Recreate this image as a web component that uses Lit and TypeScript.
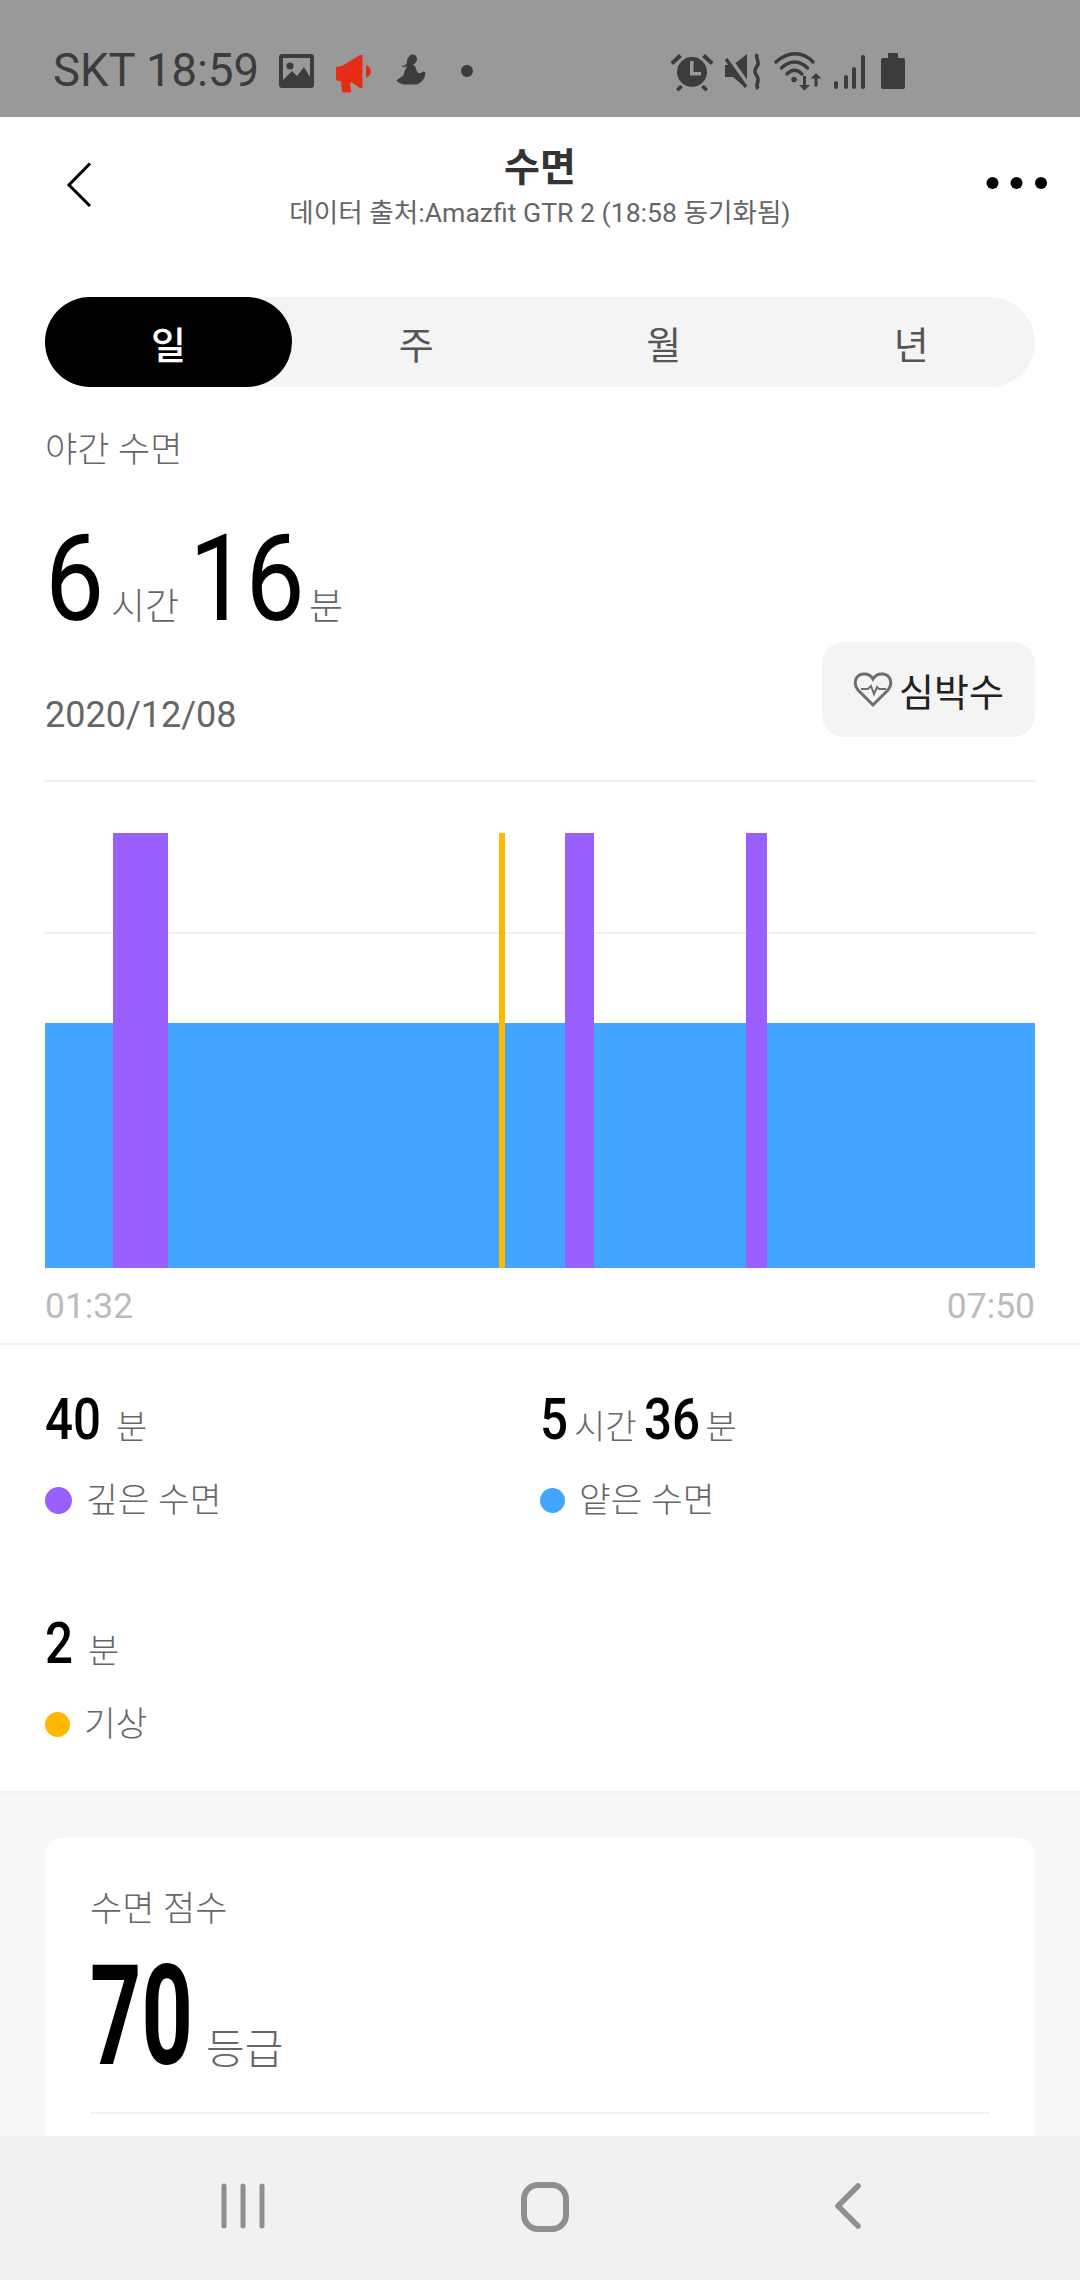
import { LitElement, html, css, svg } from "lit";
import { customElement } from "lit/decorators.js";

const BLUE = "#42a5ff";
const PURPLE = "#9a60ff";
const YELLOW = "#ffb800";

// chart segments in chart coordinates (x, width, colour)
const SEGMENTS = [
  { x: 68, w: 55, c: PURPLE },
  { x: 454, w: 6, c: YELLOW },
  { x: 520, w: 29, c: PURPLE },
  { x: 701, w: 21, c: PURPLE },
];

const num = (v: string, cls: string, adv: number) =>
  html`<span class="num" style="width:${v.length * adv}px"><span class="digits ${cls}">${v}</span></span>`;

@customElement("app-root")
export class AppRoot extends LitElement {
  static styles = css`
    :host { display: block; width: 1080px; height: 2280px; overflow: hidden; position: relative; background: #fff;
      font-family: Roboto, "Noto Sans CJK KR", sans-serif; color: #666; }
    svg { display: block; }
    .status { height: 117px; background: #999; display: flex; align-items: center; color: #3c3c3c; box-sizing: border-box; padding: 24px 0 0 53px; }
    .status .txt { font-size: 45.4px; line-height: 50px; white-space: nowrap; width: 217px; }
    .header { height: 143px; display: flex; align-items: flex-start; }
    .side { width: 108px; height: 100%; flex: none; display: flex; }
    .side svg { margin-top: 45px; }
    .titles { flex: 1; text-align: center; padding-top: 29px; }
    .title { font-size: 39px; line-height: 44px; font-weight: 700; color: #333; }
    .sub { font-size: 26.6px; line-height: 30px; margin-top: 8px; color: #666; white-space: nowrap; }
    .main { padding: 0 45px; }
    .tabs { margin-top: 37px; height: 90px; border-radius: 45px; background: #f4f4f4; display: grid; grid-template-columns: repeat(4, 1fr); }
    .tab { display: flex; align-items: center; justify-content: center; font-size: 38px; color: #555; border-radius: 45px; }
    .tab.on { background: #000; color: #fff; font-weight: 500; width: 247px; }
    .label { margin-top: 42px; font-size: 35px; line-height: 44px; font-weight: 300; color: #666; }
    .big { margin-top: 40px; height: 132px; display: flex; align-items: baseline; line-height: 132px; }
    .num { display: inline-block; flex: none; }
    .digits { display: inline-block; transform-origin: left bottom; color: #000; white-space: nowrap; }
    .d-xl { font-size: 121px; font-weight: 450; letter-spacing: -3px; transform: scaleX(.87); }
    .d-m { font-size: 58px; font-weight: 500; transform: scaleX(.85); }
    .d-l { font-size: 140px; font-weight: 700; transform: scaleX(.64); }
    .unit-l { font-size: 37px; font-weight: 300; color: #666; margin: 0 10px 0 8px; white-space: nowrap; }
    .unit-l.min { margin-left: 14px; }
    .meta { display: flex; justify-content: space-between; align-items: flex-end; margin-top: -3px; }
    .date { font-size: 36px; line-height: 46px; color: #666; position: relative; top: 1px; }
    .hr-btn { width: 213px; height: 95px; border-radius: 22px; background: #f4f4f4; display: flex; align-items: center; justify-content: center; gap: 6px; font-size: 38px; color: #222; }
    .chart { margin-top: 43px; }
    .times { display: flex; justify-content: space-between; font-size: 35.4px; line-height: 46px; color: #bbb; margin-top: 15px; }
    .rule { height: 2px; background: #f2f2f2; margin-top: 14px; }
    .stats { display: grid; grid-template-columns: 495px 1fr; grid-auto-rows: 224px; padding: 39px 45px 0; height: 407px; border-bottom: 2px solid #f2f2f2; }
    .val { display: flex; align-items: baseline; height: 70px; line-height: 70px; }
    .u { font-size: 34px; font-weight: 300; color: #666; margin: 0 7px 0 6px; white-space: nowrap; }
    .u.sp { margin-left: 15px; }
    .cap { display: flex; align-items: center; gap: 14px; font-size: 34.5px; font-weight: 300; line-height: 44px; margin-top: 24px; color: #666; }
    .dot { width: 25px; height: 25px; border-radius: 50%; flex: none; }
    .grey { background: #f7f7f7; padding: 45px 45px 0; height: 400px; box-sizing: border-box; }
    .card { background: #fff; border-radius: 16px 16px 0 0; padding: 50px 45px 0; height: 380px; box-sizing: border-box; }
    .clabel { font-size: 35px; font-weight: 300; line-height: 44px; color: #666; }
    .score { display: flex; align-items: baseline; height: 130px; line-height: 130px; margin-top: 19px; }
    .score .u { font-size: 42px; margin-left: 18px; }
    .cline { height: 2px; background: #f2f2f2; margin-top: 31px; }
    .nav { position: absolute; left: 0; right: 0; bottom: 0; height: 144px; background: #f1f1f1; }
    .nav svg { position: absolute; left: 0; top: 0; }
  `;

  render() {
    return html`
      <div class="status">
        <span class="txt">SKT 18:59</span>
        <svg width="760" height="46" viewBox="270 47 760 46">
          <g fill="#3c3c3c">
            <!-- picture -->
            <path fill-rule="evenodd" d="M282 53h29a3 3 0 0 1 3 3v28a3 3 0 0 1-3 3h-29a3 3 0 0 1-3-3V56a3 3 0 0 1 3-3zM283 57v22l9-9 5 5 7-9 6 10V57z" />
            <circle cx="290" cy="65" r="3.600" />
            <!-- person -->
            <path d="M411 54c3-1.500 6 1 6 4s-2 5-4 5.500c3 2 3 4 3.500 6 1.500 4 5 3 6 1l3 1c-.5 6-3.500 10-9 12h-11c-4 0-8-2.500-9-4 2-2 6-4 7-5.500 1-3 1-5 3.500-8.500-1.500.5-4 1-5.500-.5 3 0 5-1.500 5.500-3-.5-3 1-6.500 4-8.500z" />
            <circle cx="467" cy="70" r="6" />
            <!-- alarm -->
            <circle cx="692" cy="71" r="15" />
            <path d="M679 53l3 3-9 8-2.500-3zM705 53l-3 3 9 8 2.500-3zM680 84l3 2-4.500 4.500-2.500-2.500zM704 84l-3 2 4.500 4.500 2.500-2.500z" />
            <path d="M690 60h3.500v11h7.500v3.500h-11z" fill="#999" />
            <!-- mute: solid speaker cut by a slash -->
            <path d="M725 64h8l14-11v35l-14-12h-8z" />
            <path d="M726 54l24 34" fill="none" stroke="#999" stroke-width="6" />
            <path d="M726 58l20 28" fill="none" stroke="#3c3c3c" stroke-width="3.500" />
            <path d="M757 53c-2 4 2 6 1 10s-4 4-3 8 4 5 3 9-2 5 0 8" fill="none" stroke="#3c3c3c" stroke-width="3.600" />
            <!-- wifi -->
            <path d="M776 61c12-11 27-11 37 0M781.500 67c8-8 18-8 26 0M787 73c5-5 10-5 15 0" fill="none" stroke="#3c3c3c" stroke-width="3.400" stroke-linecap="round"/>
            <circle cx="794" cy="78.500" r="2.800" />
            <path d="M803 75h3v9h4l-5.500 5.500-5.500-5.500h4zM816 72l5.500 5.500h-4v8h-3v-8h-4z" />
            <!-- signal -->
            <rect x="834" y="80" width="4" height="8" rx="2" />
            <rect x="844" y="74" width="4" height="14" rx="2" />
            <rect x="852" y="66" width="4" height="22" rx="2" />
            <rect x="861" y="54" width="4" height="34" rx="2" />
            <!-- battery -->
            <path d="M888 52h10v5h5a2 2 0 0 1 2 2v27a2 2 0 0 1-2 2h-20a2 2 0 0 1-2-2V59a2 2 0 0 1 2-2h5z" />
          </g>
          <path fill="#e62b16" d="M336 66l6-1 18-11h2.500v33H360l-9-6-1 2 1 7c0 1-.5 1.500-1.500 1.500h-6c-1 0-1.500-.5-1.500-1.500l-1-10h-2c-2 0-3-1-3-2.500v-9c0-1.500 0-2.500 1-3zM366 64c5 1 8 9 0 13z"/>
        </svg>
      </div>

      <div class="header">
        <div class="side">
          <svg width="108" height="50" viewBox="0 0 108 50"><path d="M90 1.500L69 23l21 21" fill="none" stroke="#000" stroke-width="3" /></svg>
        </div>
        <div class="titles">
          <div class="title">수면</div>
          <div class="sub">데이터 출처:Amazfit GTR 2 (18:58 동기화됨)</div>
        </div>
        <div class="side">
          <svg width="108" height="50" viewBox="0 0 108 50"><g fill="#000"><circle cx="20.500" cy="21" r="6"/><circle cx="44.500" cy="21" r="6"/><circle cx="69" cy="21" r="6"/></g></svg>
        </div>
      </div>

      <div class="main">
        <div class="tabs">
          <div class="tab on">일</div><div class="tab">주</div><div class="tab">월</div><div class="tab">년</div>
        </div>
        <div class="label">야간 수면</div>
        <div class="big">
          ${num("6", "d-xl", 58)}<span class="unit-l">시간</span>${num("16", "d-xl", 53)}<span class="unit-l min">분</span>
        </div>
        <div class="meta">
          <div class="date">2020/12/08</div>
          <div class="hr-btn">
            <svg width="40" height="36" viewBox="0 0 40 36" fill="none" stroke="#6e6e6e"><path stroke-width="3" d="M20 33L5 18C0 12 2 3 10 2c4-.5 8 1.500 10 5 2-3.500 6-5.500 10-5 8 1 10 10 5 16z"/><path stroke-width="2" d="M8 17h7l3-3 3 8 3-7 2 2h7"/></svg>
            <span>심박수</span>
          </div>
        </div>
        <div class="chart">
          <svg width="990" height="488" viewBox="0 0 990 488">
            <rect x="0" y="0" width="990" height="2" fill="#f2f2f2"/>
            <rect x="0" y="152" width="990" height="2" fill="#f2f2f2"/>
            <rect x="0" y="243" width="990" height="245" fill="${BLUE}"/>
            ${SEGMENTS.map((s) => svg`<rect x="${s.x}" y="53" width="${s.w}" height="435" fill="${s.c}"/>`)}
          </svg>
        </div>
        <div class="times"><span>01:32</span><span>07:50</span></div>
      </div>
      <div class="rule"></div>

      <div class="stats">
        <div>
          <div class="val">${num("40", "d-m", 28)}<span class="u sp">분</span></div>
          <div class="cap"><span class="dot" style="width:27px;height:27px;background:${PURPLE}"></span>깊은 수면</div>
        </div>
        <div>
          <div class="val">${num("5", "d-m", 28)}<span class="u">시간</span>${num("36", "d-m", 28)}<span class="u">분</span></div>
          <div class="cap"><span class="dot" style="background:${BLUE}"></span>얕은 수면</div>
        </div>
        <div>
          <div class="val">${num("2", "d-m", 28)}<span class="u sp">분</span></div>
          <div class="cap"><span class="dot" style="background:${YELLOW}"></span>기상</div>
        </div>
      </div>

      <div class="grey">
        <div class="card">
          <div class="clabel">수면 점수</div>
          <div class="score">${num("70", "d-l", 49)}<span class="u">등급</span></div>
          <div class="cline"></div>
        </div>
      </div>

      <div class="nav">
        <svg width="1080" height="144" viewBox="0 2136 1080 144" fill="none" stroke="#8f8f8f">
          <g stroke-width="5" stroke-linecap="round"><path d="M224 2186v40M243 2186v40M262 2186v40"/></g>
          <rect x="524" y="2185" width="42" height="44" rx="14" stroke-width="6"/>
          <path d="M858 2186l-20 20 20 20" stroke-width="5.500" stroke-linecap="round" stroke-linejoin="round"/>
        </svg>
      </div>
    `;
  }
}
